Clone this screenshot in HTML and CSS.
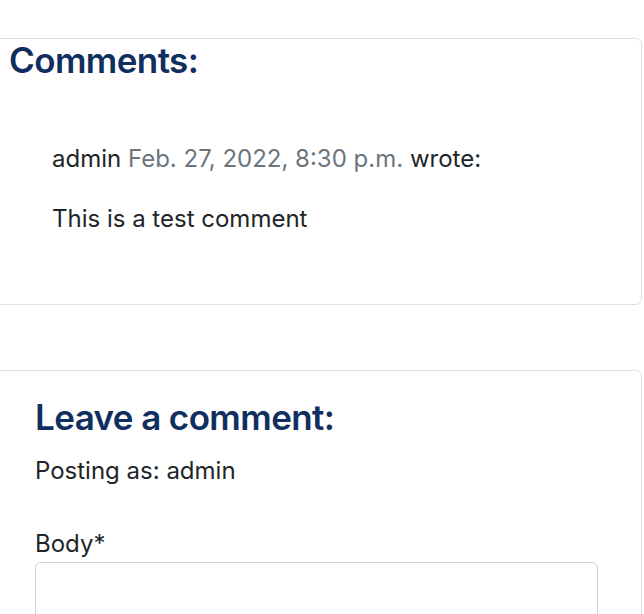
FILE: index.html
```html
<!DOCTYPE html>
<html lang="en">
<head>
<meta charset="utf-8">
<title>Comments</title>
<link rel="stylesheet" href="styles.css">
</head>
<body>
<div class="page">
  <section class="card card-comments">
    <h3 class="card-title">Comments:</h3>
    <div class="comment">
      <p class="comment-meta">admin <span class="comment-date">Feb. 27, 2022, 8:30 p.m.</span> wrote:</p>
      <p class="comment-body">This is a test comment</p>
    </div>
  </section>
  <section class="card card-form">
    <h3 class="card-title">Leave a comment:</h3>
    <p class="posting-as">Posting as: admin</p>
    <form class="comment-form">
      <label class="form-label" for="id_body">Body*</label>
      <textarea class="form-control" id="id_body" name="body"></textarea>
    </form>
  </section>
</div>
</body>
</html>
```
FILE: styles.css
```css
* { box-sizing: border-box; }
html, body { margin: 0; padding: 0; background: #fff; }
body {
  font-family: Inter, "Noto Sans", "Liberation Sans", sans-serif;
  font-size: 24px;
  line-height: 36px;
  color: #212529;
}
.page {
  padding-top: 38px;
  width: 644px;
  overflow: hidden;
}
.card {
  border: 1px solid #dfdfdf;
  border-radius: 6px;
  margin-left: -12px;
  width: 654px;
  background: #fff;
}
.card-title {
  margin: 0;
  font-size: 35px;
  line-height: 42px;
  font-weight: 600;
  color: #112f5e;
  letter-spacing: -0.6px;
}
.card-comments {
  padding: 0 0 0 20px;
  height: 267px;
}
.comment {
  margin-top: 60px;
  padding-left: 43px;
}
.comment p { margin: 0; }
.comment .comment-body { margin-top: 24px; }
.comment-date { color: #6c757d; }
.card-form {
  margin-top: 65px;
  padding: 25px 43px 0 46px;
  height: 260px;
}
.posting-as { margin: 15px 0 0; }
.comment-form { margin-top: 37px; }
.form-label { display: block; line-height: 36px; }
.form-control {
  display: block;
  margin-top: 0;
  width: 100%;
  height: 80px;
  border: 1px solid #ced4da;
  border-radius: 6px;
  resize: none;
  font: inherit;
}
```
